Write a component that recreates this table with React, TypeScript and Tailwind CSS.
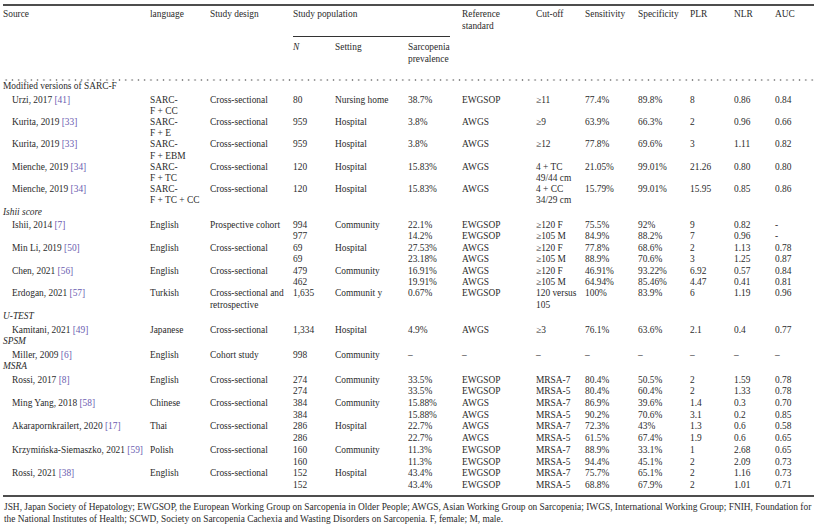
import React from "react";

type DataRow = {
  src: string;
  cite: string;
  cells: (string | string[])[];
};

type Section = {
  title: string;
  italic: boolean;
  lh: string;
  rows: DataRow[];
};

const CS = "Cross-sectional";

const sections: Section[] = [
  {
    title: "Modified versions of SARC-F",
    italic: false,
    lh: "leading-[11.2px]",
    rows: [
      { src: "Urzi, 2017", cite: "[41]", cells: [["SARC-", "F + CC"], CS, "80", "Nursing home", "38.7%", "EWGSOP", "≥11", "77.4%", "89.8%", "8", "0.86", "0.84"] },
      { src: "Kurita, 2019", cite: "[33]", cells: [["SARC-", "F + E"], CS, "959", "Hospital", "3.8%", "AWGS", "≥9", "63.9%", "66.3%", "2", "0.96", "0.66"] },
      { src: "Kurita, 2019", cite: "[33]", cells: [["SARC-", "F + EBM"], CS, "959", "Hospital", "3.8%", "AWGS", "≥12", "77.8%", "69.6%", "3", "1.11", "0.82"] },
      { src: "Mienche, 2019", cite: "[34]", cells: [["SARC-", "F + TC"], CS, "120", "Hospital", "15.83%", "AWGS", ["4 + TC", "49/44 cm"], "21.05%", "99.01%", "21.26", "0.80", "0.80"] },
      { src: "Mienche, 2019", cite: "[34]", cells: [["SARC-", "F + TC + CC"], CS, "120", "Hospital", "15.83%", "AWGS", ["4 + CC", "34/29 cm"], "15.79%", "99.01%", "15.95", "0.85", "0.86"] },
    ],
  },
  {
    title: "Ishii score",
    italic: true,
    lh: "leading-[11.4px]",
    rows: [
      { src: "Ishii, 2014", cite: "[7]", cells: ["English", "Prospective cohort", ["994", "977"], "Community", ["22.1%", "14.2%"], ["EWGSOP", "EWGSOP"], ["≥120 F", "≥105 M"], ["75.5%", "84.9%"], ["92%", "88.2%"], ["9", "7"], ["0.82", "0.96"], ["-", "-"]] },
      { src: "Min Li, 2019", cite: "[50]", cells: ["English", CS, ["69", "69"], "Hospital", ["27.53%", "23.18%"], ["AWGS", "AWGS"], ["≥120 F", "≥105 M"], ["77.8%", "88.9%"], ["68.6%", "70.6%"], ["2", "3"], ["1.13", "1.25"], ["0.78", "0.87"]] },
      { src: "Chen, 2021", cite: "[56]", cells: ["English", CS, ["479", "462"], "Community", ["16.91%", "19.91%"], ["AWGS", "AWGS"], ["≥120 F", "≥105 M"], ["46.91%", "64.94%"], ["93.22%", "85.46%"], ["6.92", "4.47"], ["0.57", "0.41"], ["0.84", "0.81"]] },
      { src: "Erdogan, 2021", cite: "[57]", cells: ["Turkish", ["Cross-sectional and", "retrospective"], "1,635", "Communit y", "0.67%", "EWGSOP", ["120 versus", "105"], "100%", "83.9%", "6", "1.19", "0.96"] },
    ],
  },
  {
    title: "U-TEST",
    italic: true,
    lh: "leading-[11.4px]",
    rows: [
      { src: "Kamitani, 2021", cite: "[49]", cells: ["Japanese", CS, "1,334", "Hospital", "4.9%", "AWGS", "≥3", "76.1%", "63.6%", "2.1", "0.4", "0.77"] },
    ],
  },
  {
    title: "SPSM",
    italic: true,
    lh: "leading-[11.4px]",
    rows: [
      { src: "Miller, 2009", cite: "[6]", cells: ["English", "Cohort study", "998", "Community", "–", "–", "–", "–", "–", "–", "–", "–"] },
    ],
  },
  {
    title: "MSRA",
    italic: true,
    lh: "leading-[11.7px]",
    rows: [
      { src: "Rossi, 2017", cite: "[8]", cells: ["English", CS, ["274", "274"], "Community", ["33.5%", "33.5%"], ["EWGSOP", "EWGSOP"], ["MRSA-7", "MRSA-5"], ["80.4%", "80.4%"], ["50.5%", "60.4%"], ["2", "2"], ["1.59", "1.33"], ["0.78", "0.78"]] },
      { src: "Ming Yang, 2018", cite: "[58]", cells: ["Chinese", CS, ["384", "384"], "Community", ["15.88%", "15.88%"], ["AWGS", "AWGS"], ["MRSA-7", "MRSA-5"], ["86.9%", "90.2%"], ["39.6%", "70.6%"], ["1.4", "3.1"], ["0.3", "0.2"], ["0.70", "0.85"]] },
      { src: "Akarapornkrailert, 2020", cite: "[17]", cells: ["Thai", CS, ["286", "286"], "Hospital", ["22.7%", "22.7%"], ["AWGS", "AWGS"], ["MRSA-7", "MRSA-5"], ["72.3%", "61.5%"], ["43%", "67.4%"], ["1.3", "1.9"], ["0.6", "0.6"], ["0.58", "0.65"]] },
      { src: "Krzymińska-Siemaszko, 2021", cite: "[59]", cells: ["Polish", CS, ["160", "160"], "Community", ["11.3%", "11.3%"], ["EWGSOP", "EWGSOP"], ["MRSA-7", "MRSA-5"], ["88.9%", "94.4%"], ["33.1%", "45.1%"], ["1", "2"], ["2.68", "2.09"], ["0.65", "0.73"]] },
      { src: "Rossi, 2021", cite: "[38]", cells: ["English", CS, ["152", "152"], "Hospital", ["43.4%", "43.4%"], ["EWGSOP", "EWGSOP"], ["MRSA-7", "MRSA-5"], ["75.7%", "68.8%"], ["65.1%", "67.9%"], ["2", "2"], ["1.16", "1.01"], ["0.73", "0.71"]] },
    ],
  },
];

const widths = [147, 60, 83, 42, 73, 54, 74, 49, 53, 52, 44, 41, 39];

function Lines({ v }: { v: string | string[] }) {
  const lines = Array.isArray(v) ? v : [v];
  return (
    <>
      {lines.map((l, i) => (
        <div key={i}>{l}</div>
      ))}
    </>
  );
}

export default function App() {
  return (
    <div className="w-[818px] h-[529px] bg-white text-[#2b2b2b] font-['Liberation_Serif',serif] text-[9.4px] leading-[11.5px] overflow-hidden">
      <table className="ml-[3px] mt-[4px] table-fixed border-collapse border-t-2 border-b-2 border-[#4d4d4d] w-[811px]">
        <colgroup>
          {widths.map((w, i) => (
            <col key={i} style={{ width: w }} />
          ))}
        </colgroup>
        <thead>
          {/* header row 1 */}
          <tr className="align-top">
            <td className="pt-[3px]">Source</td>
            <td className="pt-[3px]">language</td>
            <td className="pt-[3px]">Study design</td>
            <td colSpan={3} className="pt-[3px]">
              <div className="flex h-[28px] flex-col justify-between">
                <span>Study population</span>
                <div className="mr-[12px] border-b border-[#333]" />
              </div>
            </td>
            <td className="pt-[3px]">
              Reference
              <br />
              standard
            </td>
            <td className="pt-[3px]">Cut-off</td>
            <td className="pt-[3px]">Sensitivity</td>
            <td className="pt-[3px]">Specificity</td>
            <td className="pt-[3px]">PLR</td>
            <td className="pt-[3px]">NLR</td>
            <td className="pt-[3px]">AUC</td>
          </tr>
          {/* header row 2 */}
          <tr className="align-top">
            <td colSpan={3} />
            <td className="pt-[5px] italic">N</td>
            <td className="pt-[5px]">Setting</td>
            <td className="pt-[5px] pb-[14px]">
              Sarcopenia
              <br />
              prevalence
            </td>
            <td colSpan={7} />
          </tr>
          <tr>
            <td
              colSpan={13}
              className="h-[2px] p-0 bg-[radial-gradient(circle,#8a8a8a_0.7px,transparent_1.1px)] bg-[length:6.3px_2px] bg-repeat-x"
            />
          </tr>
        </thead>
        <tbody>
          {sections.map((s) => (
            <React.Fragment key={s.title}>
              <tr>
                <td colSpan={13} className={`whitespace-nowrap ${s.italic ? "italic" : ""}`}>
                  {s.title}
                </td>
              </tr>
              {s.rows.map((r, ri) => (
                <tr key={ri} className={`align-top ${s.lh}`}>
                  <td className={`pl-[9px] whitespace-nowrap ${ri === 0 ? "pt-[2px]" : ""}`}>
                    {r.src} <span className="text-[#6a5cb0]">{r.cite}</span>
                  </td>
                  {r.cells.map((c, ci) => (
                    <td key={ci} className={`whitespace-nowrap ${ri === 0 ? "pt-[2px]" : ""}`}>
                      <Lines v={c} />
                    </td>
                  ))}
                </tr>
              ))}
            </React.Fragment>
          ))}
          <tr>
            <td colSpan={13} className="h-[4px] p-0" />
          </tr>
        </tbody>
      </table>
      <div className="ml-[4px] mt-[4px] leading-[12px] whitespace-nowrap">
        <div>
          JSH, Japan Society of Hepatology; EWGSOP, the European Working Group on Sarcopenia in Older People; AWGS, Asian Working Group on Sarcopenia; IWGS, International Working Group; FNIH, Foundation for
        </div>
        <div>
          the National Institutes of Health; SCWD, Society on Sarcopenia Cachexia and Wasting Disorders on Sarcopenia. F, female; M, male.
        </div>
      </div>
    </div>
  );
}
